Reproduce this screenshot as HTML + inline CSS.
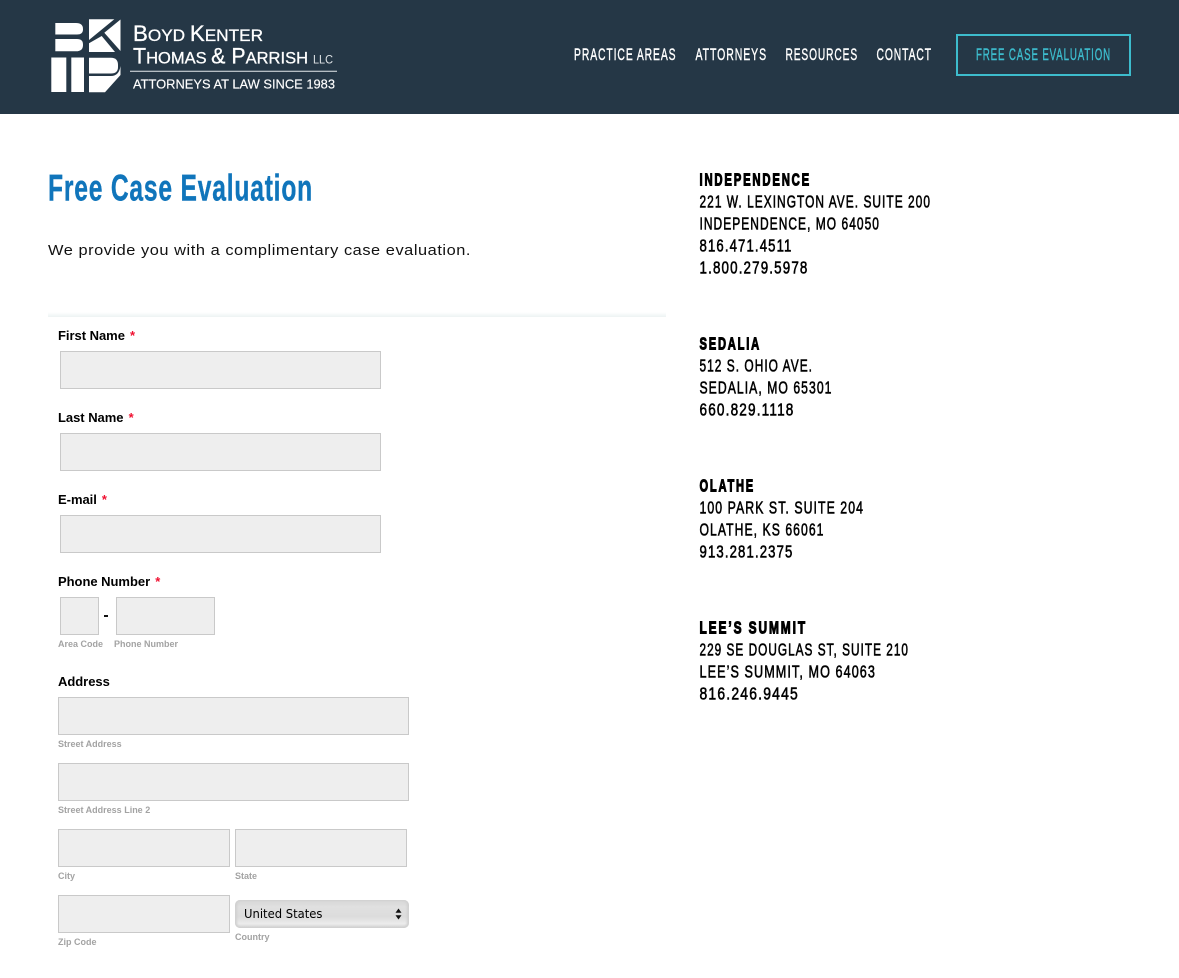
<!DOCTYPE html>
<html lang="en">
<head>
<meta charset="utf-8">
<title>Free Case Evaluation</title>
<style>
html,body{margin:0;padding:0;background:#fff}
body{position:relative;width:1179px;height:978px;overflow:hidden;font-family:"Liberation Sans",Arial,sans-serif}
#hdr{position:absolute;left:0;top:0;width:1179px;height:114px;background:#253746}
#art{position:absolute;left:0;top:0}
.btn{position:absolute;left:956px;top:34px;width:171px;height:38px;border:2px solid #3dbccd}
.rule{position:absolute;left:48px;top:312px;width:618px;height:5px;background:linear-gradient(#fff,#edf3f3)}
.i{position:absolute;box-sizing:border-box;background:#eee;border:1px solid #c9c9c9}
.l{position:absolute;left:58px;font-size:13px;font-weight:bold;color:#000;line-height:16px;white-space:nowrap;letter-spacing:-.03px}
.l b{color:#f01030;margin-left:1.5px}
.s{position:absolute;font-size:9px;font-weight:bold;color:#a3a3a3;line-height:12px;white-space:nowrap}
.sel{position:absolute;left:235px;top:900px;width:174px;height:28px;box-sizing:border-box;border-radius:5px;background:linear-gradient(#d6d6d6 0,#e0e0e0 25%,#dcdcdc 60%,#ececec 85%,#cfcfcf 100%);box-shadow:inset 2px 0 2px #d0d0d0,inset -2px 0 2px #d0d0d0}
.sel span{position:absolute;left:9px;top:7px;font:12px/15px "DejaVu Sans",sans-serif;color:#000;transform:scaleX(.965);transform-origin:left}
.sel svg{position:absolute;left:160px;top:8px}
.dash{position:absolute;left:104px;top:615px;width:4px;height:2px;background:#111}
text{font-family:"Liberation Sans",Arial,sans-serif}
.logo{stroke:#fff;stroke-width:.3}
.nav{font-size:17px;fill:#fff;stroke:#fff;stroke-width:.4;letter-spacing:1.5px}
.ah{font-size:17.5px;font-weight:bold;fill:#000;stroke:#000;stroke-width:1.1;letter-spacing:2.8px}
.ad{font-size:17.5px;fill:#000;stroke:#000;stroke-width:.6;letter-spacing:1.5px}
</style>
</head>
<body>
<div id="hdr"></div>
<div class="btn"></div>
<div class="rule"></div>

<svg id="art" width="1179" height="978" viewBox="0 0 1179 978" xmlns="http://www.w3.org/2000/svg">
  <!-- logo mark -->
  <g fill="#fff">
    <path d="M55.300 23H76Q83 23 83 29V29.500Q83 34.500 77 34.500H55.300Z"/>
    <path d="M55.300 39H77Q83 39 83 44.500V45Q83 51.300 76 51.300H55.300Z"/>
    <path d="M89 19.300H114.300L89 40Z"/>
    <path d="M120.500 19.500V51L104.300 32.700Z"/>
    <path d="M89 43.300L101.700 36L115 52H89Z"/>
    <rect x="51.300" y="57.500" width="15" height="34.500"/>
    <rect x="71.300" y="57.500" width="12.700" height="34.500"/>
    <path d="M89 57.700H111Q118 57.700 118 65V67Q118 73.500 111 73.500H89Z"/>
    <path d="M89 76H111Q119 76 120.500 66V75L105 92.300H89Z"/>
  </g>
  <!-- logo text -->
  <text class="logo" x="133" y="41" fill="#fff" font-size="22" textLength="130" lengthAdjust="spacingAndGlyphs">B<tspan font-size="17">OYD </tspan>K<tspan font-size="17">ENTER</tspan></text>
  <text class="logo" x="133" y="63.300" fill="#fff" font-size="22" textLength="175" lengthAdjust="spacingAndGlyphs">T<tspan font-size="17">HOMAS </tspan>&amp; P<tspan font-size="17">ARRISH</tspan></text>
  <text x="313" y="63.300" fill="#dfe3e6" font-size="11.500" textLength="20" lengthAdjust="spacingAndGlyphs">LLC</text>
  <rect x="130" y="70.700" width="207" height="1.200" fill="#c5ccd1"/>
  <text class="logo" style="stroke-width:.15" x="133" y="88.300" fill="#fff" font-size="13" textLength="202" lengthAdjust="spacingAndGlyphs">ATTORNEYS AT LAW SINCE 1983</text>

  <!-- nav -->
  <text class="nav" x="574" y="60" textLength="102.500" lengthAdjust="spacingAndGlyphs">PRACTICE AREAS</text>
  <text class="nav" x="695.500" y="60" textLength="71.500" lengthAdjust="spacingAndGlyphs">ATTORNEYS</text>
  <text class="nav" x="785.500" y="60" textLength="72.500" lengthAdjust="spacingAndGlyphs">RESOURCES</text>
  <text class="nav" x="876.500" y="60" textLength="55.500" lengthAdjust="spacingAndGlyphs">CONTACT</text>
  <text class="nav" x="976" y="60" textLength="135" lengthAdjust="spacingAndGlyphs" style="fill:#3dbccd;stroke:#3dbccd">FREE CASE EVALUATION</text>

  <!-- heading -->
  <text x="48" y="200.700" font-size="37" font-weight="bold" letter-spacing="1.2" fill="#1075bb" stroke="#1075bb" stroke-width=".4" textLength="265" lengthAdjust="spacingAndGlyphs">Free Case Evaluation</text>
  <text x="48" y="255" font-size="15" letter-spacing=".5" fill="#111" textLength="423" lengthAdjust="spacingAndGlyphs">We provide you with a complimentary case evaluation.</text>

  <!-- offices -->
  <text class="ah" x="699.500" y="185.700" textLength="111.500" lengthAdjust="spacingAndGlyphs">INDEPENDENCE</text>
  <text class="ad" x="699.500" y="207.700" textLength="231.500" lengthAdjust="spacingAndGlyphs">221 W. LEXINGTON AVE. SUITE 200</text>
  <text class="ad" x="699.500" y="229.700" textLength="180.500" lengthAdjust="spacingAndGlyphs">INDEPENDENCE, MO 64050</text>
  <text class="ad" x="699.500" y="251.700" textLength="93" lengthAdjust="spacingAndGlyphs">816.471.4511</text>
  <text class="ad" x="699.500" y="273.700" textLength="109" lengthAdjust="spacingAndGlyphs">1.800.279.5978</text>

  <text class="ah" x="699.500" y="349.700" textLength="61.500" lengthAdjust="spacingAndGlyphs">SEDALIA</text>
  <text class="ad" x="699.500" y="371.700" textLength="113.500" lengthAdjust="spacingAndGlyphs">512 S. OHIO AVE.</text>
  <text class="ad" x="699.500" y="393.700" textLength="133" lengthAdjust="spacingAndGlyphs">SEDALIA, MO 65301</text>
  <text class="ad" x="699.500" y="415.700" textLength="95" lengthAdjust="spacingAndGlyphs">660.829.1118</text>

  <text class="ah" x="699.500" y="491.700" textLength="55.500" lengthAdjust="spacingAndGlyphs">OLATHE</text>
  <text class="ad" x="699.500" y="513.700" textLength="164.500" lengthAdjust="spacingAndGlyphs">100 PARK ST. SUITE 204</text>
  <text class="ad" x="699.500" y="535.700" textLength="125" lengthAdjust="spacingAndGlyphs">OLATHE, KS 66061</text>
  <text class="ad" x="699.500" y="557.700" textLength="94" lengthAdjust="spacingAndGlyphs">913.281.2375</text>

  <text class="ah" x="699.500" y="633.700" textLength="107.500" lengthAdjust="spacingAndGlyphs">LEE’S SUMMIT</text>
  <text class="ad" x="699.500" y="655.700" textLength="209.500" lengthAdjust="spacingAndGlyphs">229 SE DOUGLAS ST, SUITE 210</text>
  <text class="ad" x="699.500" y="677.700" textLength="176.500" lengthAdjust="spacingAndGlyphs">LEE’S SUMMIT, MO 64063</text>
  <text class="ad" x="699.500" y="699.700" textLength="99.500" lengthAdjust="spacingAndGlyphs">816.246.9445</text>
</svg>

<!-- form -->
<div class="l" style="top:328px">First Name <b>*</b></div>
<div class="i" style="left:60px;top:351px;width:321px;height:38px"></div>
<div class="l" style="top:410px">Last Name <b>*</b></div>
<div class="i" style="left:60px;top:433px;width:321px;height:38px"></div>
<div class="l" style="top:492px">E-mail <b>*</b></div>
<div class="i" style="left:60px;top:515px;width:321px;height:38px"></div>
<div class="l" style="top:574px">Phone Number <b>*</b></div>
<div class="i" style="left:60px;top:597px;width:39px;height:38px"></div>
<div class="dash"></div>
<div class="i" style="left:116px;top:597px;width:99px;height:38px"></div>
<div class="s" style="left:58px;top:638px">Area Code</div>
<div class="s" style="left:114px;top:638px">Phone Number</div>
<div class="l" style="top:674px">Address</div>
<div class="i" style="left:58px;top:697px;width:351px;height:38px"></div>
<div class="s" style="left:58px;top:738px">Street Address</div>
<div class="i" style="left:58px;top:763px;width:351px;height:38px"></div>
<div class="s" style="left:58px;top:804px">Street Address Line 2</div>
<div class="i" style="left:58px;top:829px;width:172px;height:38px"></div>
<div class="s" style="left:58px;top:870px">City</div>
<div class="i" style="left:235px;top:829px;width:172px;height:38px"></div>
<div class="s" style="left:235px;top:870px">State</div>
<div class="i" style="left:58px;top:895px;width:172px;height:38px"></div>
<div class="s" style="left:58px;top:936px">Zip Code</div>
<div class="sel"><span>United States</span>
  <svg width="7" height="12" viewBox="0 0 7 12"><path d="M3.500 0.500L6.500 4.800H.5Z M3.500 11.500L6.500 7.200H.5Z" fill="#111"/></svg>
</div>
<div class="s" style="left:235px;top:931px">Country</div>
</body>
</html>
